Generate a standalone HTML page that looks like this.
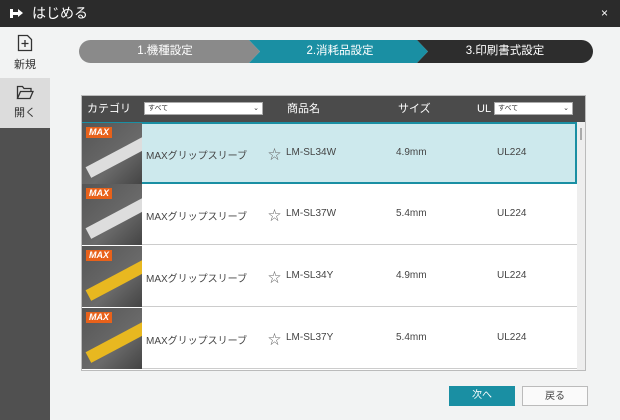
<!DOCTYPE html>
<html><head><meta charset="utf-8"><style>
*{margin:0;padding:0;box-sizing:border-box}
body{width:620px;height:420px;overflow:hidden;background:#f2f3f3;font-family:"Liberation Sans","Noto Sans CJK JP",sans-serif;position:relative;font-size:10px;color:#333}
.abs{position:absolute}
.title{left:0;top:0;width:620px;height:27px;background:#2b2b2b;color:#fff;font-size:14px;line-height:27px;padding-left:32px}
.side{left:0;top:27px;width:50px;height:393px;background:#505050}
.s1{left:0;top:27px;width:50px;height:51px;background:#f2f3f3;text-align:center;font-size:11px}
.s2{left:0;top:78px;width:50px;height:50px;background:#dcdcdc;text-align:center;font-size:11px}
.step{top:40px;height:23px;line-height:23px;color:#fff;font-size:11.5px;text-align:center}
.table{left:81px;top:95px;width:505px;height:276px;background:#fff;border:1px solid #bbb;overflow:hidden}
.hdr{left:0;top:0;width:505px;height:26px;background:#4b4b4b;color:#fff;font-size:11px;line-height:26px}
.sel{background:#fff;border:1px solid #aaa;height:13px;font-size:7px;line-height:12px;padding-left:3px;color:#333}
.row{left:0;width:495px;height:61px;border-bottom:1px solid #ccc;font-size:10px;color:#444}
.img{left:0;top:0;width:60px;height:61px;background:linear-gradient(135deg,#555 0%,#6a6a6a 60%,#444 100%);overflow:hidden}
.max{left:4px;top:4px;background:#e8611a;color:#fff;font-weight:bold;font-style:italic;font-size:9px;padding:0 3px;line-height:11px;z-index:2}
.btn{top:386px;height:20px;font-size:10px;text-align:center;line-height:19px}
</style></head><body>
<div class="abs title">はじめる</div>
<div class="abs" style="left:10px;top:9px;width:3px;height:9px;background:#fff"></div>
<div class="abs" style="left:13px;top:12px;width:6px;height:3px;background:#fff"></div>
<div class="abs" style="left:18px;top:9px;width:0;height:0;border-left:5px solid #fff;border-top:4.5px solid transparent;border-bottom:4.5px solid transparent"></div>
<div class="abs" style="left:601px;top:6px;color:#fff;font-size:12px">×</div>
<div class="abs side"></div>
<div class="abs s1"><svg width="16" height="18" style="margin-top:7px" viewBox="0 0 16 18"><path d="M1.5 1.5h9l4 4v11h-13z" fill="none" stroke="#333" stroke-width="1.3"/><path d="M8 6v7M4.5 9.5h7" stroke="#333" stroke-width="1.3"/></svg><div style="margin-top:1px">新規</div></div>
<div class="abs s2"><svg width="18" height="15" style="margin-top:7px" viewBox="0 0 18 15"><path d="M1.5 13.5v-12h5l1.5 2h7v3M1.5 13.5l3-7h12.5l-3 7z" fill="none" stroke="#333" stroke-width="1.3"/></svg><div style="margin-top:1px">開く</div></div>
<svg class="abs" style="left:79px;top:40px" width="514" height="23">
<path d="M11.5 0H170l11 11.5L170 23H11.5A11.5 11.5 0 0 1 11.5 0z" fill="#8a8a8a"/>
<path d="M170 0h168l11 11.5L338 23H170l11-11.5z" fill="#1a8fa3"/>
<path d="M338 0h164.5a11.5 11.5 0 0 1 0 23H338l11-11.5z" fill="#2d2d2d"/>
</svg>
<div class="abs step" style="left:90px;width:150px">1.機種設定</div>
<div class="abs step" style="left:260px;width:160px">2.消耗品設定</div>
<div class="abs step" style="left:430px;width:150px">3.印刷書式設定</div>
<div class="abs table">
<div class="abs hdr"><span class="abs" style="left:5px">カテゴリ</span>
<div class="abs sel" style="left:62px;top:6px;width:119px">すべて<span style="position:absolute;right:3px">⌄</span></div>
<span class="abs" style="left:205px">商品名</span><span class="abs" style="left:316px">サイズ</span><span class="abs" style="left:395px">UL</span>
<div class="abs sel" style="left:412px;top:6px;width:79px">すべて<span style="position:absolute;right:3px">⌄</span></div></div>
<div class="abs" style="left:495px;top:26px;width:9px;height:250px;background:#eee"></div>
<div class="abs" style="left:498px;top:32px;width:2px;height:12px;background:#aaa"></div>
<div class="abs row" style="top:26px;background:#cde9ed;border:2px solid #1a8fa3;height:62px"></div>
</div>
<div class="abs table" style="background:transparent;border-color:transparent">
<div class="abs row" style="top:27px;border:none"><div class="abs img"><div class="abs max">MAX</div><div class="abs" style="left:2px;top:26px;width:75px;height:12px;background:#ddd;transform:rotate(-28deg)"></div></div><span class="abs" style="left:64px;top:24px">MAXグリップスリーブ</span><span class="abs" style="left:186px;top:21px;font-size:13px;color:#666">☆</span><span class="abs" style="left:204px;top:24px">LM-SL34W</span><span class="abs" style="left:314px;top:24px">4.9mm</span><span class="abs" style="left:415px;top:24px">UL224</span></div>
<div class="abs row" style="top:88px"><div class="abs img"><div class="abs max">MAX</div><div class="abs" style="left:2px;top:26px;width:75px;height:12px;background:#ddd;transform:rotate(-28deg)"></div></div><span class="abs" style="left:64px;top:24px">MAXグリップスリーブ</span><span class="abs" style="left:186px;top:21px;font-size:13px;color:#666">☆</span><span class="abs" style="left:204px;top:24px">LM-SL37W</span><span class="abs" style="left:314px;top:24px">5.4mm</span><span class="abs" style="left:415px;top:24px">UL224</span></div>
<div class="abs row" style="top:150px"><div class="abs img"><div class="abs max">MAX</div><div class="abs" style="left:2px;top:26px;width:75px;height:12px;background:#e8b820;transform:rotate(-28deg)"></div></div><span class="abs" style="left:64px;top:24px">MAXグリップスリーブ</span><span class="abs" style="left:186px;top:21px;font-size:13px;color:#666">☆</span><span class="abs" style="left:204px;top:24px">LM-SL34Y</span><span class="abs" style="left:314px;top:24px">4.9mm</span><span class="abs" style="left:415px;top:24px">UL224</span></div>
<div class="abs row" style="top:212px"><div class="abs img"><div class="abs max">MAX</div><div class="abs" style="left:2px;top:26px;width:75px;height:12px;background:#e8b820;transform:rotate(-28deg)"></div></div><span class="abs" style="left:64px;top:24px">MAXグリップスリーブ</span><span class="abs" style="left:186px;top:21px;font-size:13px;color:#666">☆</span><span class="abs" style="left:204px;top:24px">LM-SL37Y</span><span class="abs" style="left:314px;top:24px">5.4mm</span><span class="abs" style="left:415px;top:24px">UL224</span></div>
</div>
<div class="abs btn" style="left:449px;width:66px;background:#1a8fa3;color:#fff">次へ</div>
<div class="abs btn" style="left:522px;width:66px;background:#fafafa;border:1px solid #bbb;color:#444">戻る</div>
</body></html>
